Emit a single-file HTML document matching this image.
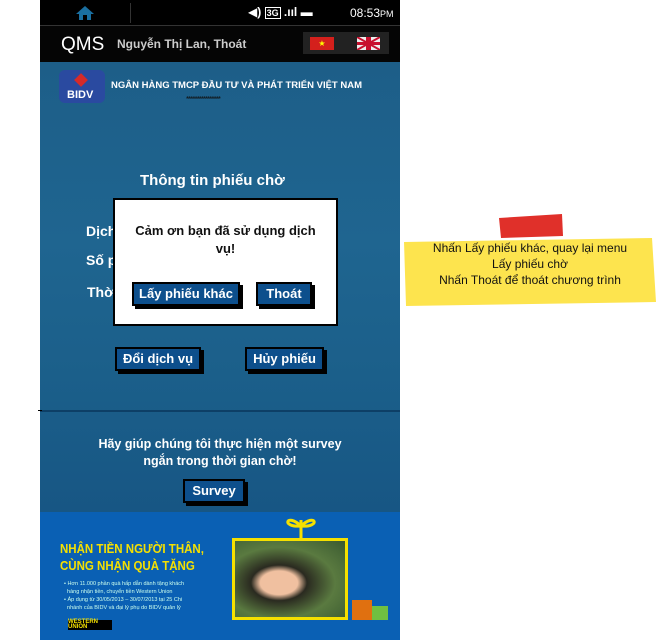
<!DOCTYPE html>
<html><head><meta charset="utf-8"><style>
body{margin:0;width:658px;height:640px;background:#fff;position:relative;overflow:hidden;font-family:"Liberation Sans","DejaVu Sans",sans-serif}
.a{position:absolute}
.btn{position:absolute;background:#0d4f8c;color:#fff;font-weight:bold;font-size:13px;text-align:center;border:2px solid #000;box-shadow:3px 3px 0 #000;line-height:20px}
.w{color:#fff;font-weight:bold;font-size:14px}
</style></head><body>
<div class="a" style="left:40px;top:0;width:360px;height:25px;background:#000"></div>
<svg class="a" style="left:75px;top:5px" width="20" height="16"><path d="M10 1 L19 9 H16 V15 H12 V10 H8 V15 H4 V9 H1 Z" fill="#1a6fa0"/></svg>
<div class="a" style="left:130px;top:3px;width:1px;height:20px;background:#333"></div>
<div class="a" style="left:248px;top:5px;color:#fff;font-size:12px;font-weight:bold">◀) <span style="border:1px solid #fff;font-size:9px;padding:0 1px">3G</span> .ııl ▬</div>
<div class="a" style="left:350px;top:6px;color:#fff;font-size:12px">08:53<span style="font-size:9px">PM</span></div>
<div class="a" style="left:40px;top:25px;width:360px;height:37px;background:#050505;border-top:1px solid #333"></div>
<div class="a" style="left:61px;top:34px;color:#fff;font-size:19px">QMS</div>
<div class="a" style="left:117px;top:37px;color:#ccc;font-size:12px;font-weight:bold">Nguyễn Thị Lan, Thoát</div>
<div class="a" style="left:303px;top:32px;width:86px;height:22px;background:#222"></div>
<div class="a" style="left:310px;top:37px;width:24px;height:13px;background:#d4201c;color:#ff0;font-size:8px;text-align:center;line-height:13px">★</div>
<div class="a" style="left:357px;top:37px;width:23px;height:13px"><svg width="23" height="13"><rect width="23" height="13" fill="#eee"/><path d="M0 0L23 13M23 0L0 13" stroke="#c8102e" stroke-width="2"/><rect x="9" width="5" height="13" fill="#c8102e"/><rect y="5" width="23" height="3" fill="#c8102e"/></svg></div>
<div class="a" style="left:40px;top:62px;width:360px;height:450px;background:linear-gradient(180deg,#1d5e88 0%,#1f6590 40%,#1b5f8a 70%,#175684 100%)"></div>
<div class="a" style="left:40px;top:410px;width:360px;height:2px;background:#0d3f66"></div>
<div class="a" style="left:38px;top:410px;width:4px;height:1px;background:#000"></div>
<div class="a" style="left:59px;top:70px;width:46px;height:33px;background:#2a4aa0;border-radius:6px"></div>
<div class="a" style="left:74px;top:73px;width:14px;height:14px;background:#d62a2a;transform:rotate(45deg) scale(.7)"></div>
<div class="a" style="left:67px;top:89px;color:#fff;font-size:11px;font-weight:bold">BIDV</div>
<div class="a" style="left:111px;top:80px;color:#fff;font-size:9.5px;font-weight:bold">NGÂN HÀNG TMCP ĐẦU TƯ VÀ PHÁT TRIỂN VIỆT NAM</div>
<div class="a" style="left:186px;top:95px;color:#111;font-size:8px;letter-spacing:-1px">****************</div>
<div class="a w" style="left:140px;top:172px;font-size:15px">Thông tin phiếu chờ</div>
<div class="a w" style="left:86px;top:223px">Dịch</div>
<div class="a w" style="left:86px;top:252px">Số p</div>
<div class="a w" style="left:87px;top:284px">Thời</div>
<div class="a" style="left:113px;top:198px;width:221px;height:124px;background:#fff;border:2px solid #000"></div>
<div class="a" style="left:115px;top:222px;width:221px;text-align:center;font-size:13px;font-weight:bold;color:#111;line-height:18px">Cảm ơn bạn đã sử dụng dịch<br>vụ!</div>
<div class="btn" style="left:132px;top:282px;width:104px">Lấy phiếu khác</div>
<div class="btn" style="left:256px;top:282px;width:52px">Thoát</div>
<div class="btn" style="left:115px;top:347px;width:82px">Đổi dịch vụ</div>
<div class="btn" style="left:245px;top:347px;width:75px">Hủy phiếu</div>
<div class="a" style="left:40px;top:436px;width:360px;text-align:center;color:#fff;font-size:12.5px;font-weight:bold;line-height:17px">Hãy giúp chúng tôi thực hiện một survey<br>ngắn trong thời gian chờ!</div>
<div class="btn" style="left:183px;top:479px;width:58px">Survey</div>
<div class="a" style="left:40px;top:512px;width:360px;height:128px;background:#0a60b4"></div>
<div class="a" style="left:60px;top:541px;color:#f5e000;font-size:12.5px;font-weight:bold;line-height:17px;transform:scaleX(.92);transform-origin:left">NHẬN TIỀN NGƯỜI THÂN,<br>CÙNG NHẬN QUÀ TẶNG</div>
<div class="a" style="left:64px;top:580px;color:#cfe;font-size:5.5px;line-height:8px">• Hơn 11.000 phần quà hấp dẫn dành tặng khách<br>&nbsp; hàng nhận tiền, chuyển tiền Western Union<br>• Áp dụng từ 30/05/2013 – 30/07/2013 tại 25 Chi<br>&nbsp; nhánh của BIDV và đại lý phụ do BIDV quản lý</div>
<div class="a" style="left:68px;top:620px;width:44px;height:10px;background:#000;color:#f5e000;font-size:6px;font-weight:bold;line-height:5px">WESTERN<br>UNION</div>
<div class="a" style="left:232px;top:538px;width:110px;height:76px;border:3px solid #f5e000;background:radial-gradient(ellipse at 40% 55%,#f0c0a0 0 20%,#2a2a20 30%,#5a7a40 60%,#3a5a30)"></div>
<svg class="a" style="left:276px;top:512px" width="50" height="28"><path d="M25 28 V8 M25 14 C10 0 5 16 25 14 C45 16 40 0 25 14" stroke="#f5e000" stroke-width="3" fill="none"/></svg>
<div class="a" style="left:352px;top:600px;width:20px;height:20px;background:#e07010"></div>
<div class="a" style="left:372px;top:606px;width:16px;height:14px;background:#70c040"></div>
<svg class="a" style="left:402px;top:210px" width="256" height="96"><path d="M2 32 L250 28 L254 92 L4 96 Z" fill="#fde44e"/><path d="M97 8 L160 4 L161 26 L99 28 Z" fill="#e0302a"/></svg>
<div class="a" style="left:402px;top:240px;width:256px;text-align:center;font-size:12px;color:#111;line-height:16px">Nhấn Lấy phiếu khác, quay lại menu<br>Lấy phiếu chờ<br>Nhấn Thoát để thoát chương trình</div>
</body></html>
